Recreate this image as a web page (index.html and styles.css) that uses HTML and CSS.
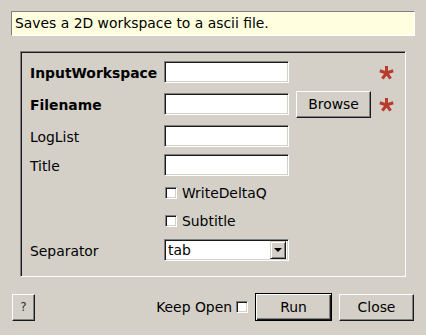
FILE: index.html
```html
<!DOCTYPE html>
<html>
  <head>
    <title>SaveAscii</title>
    <link rel="stylesheet" href="styles.css">
  </head>

  <body>
    <div class="dialog">
      <div class="tip">Saves a 2D workspace to a ascii file.</div>

      <div class="group">
        <div class="form">
          <label class="lbl bold">InputWorkspace</label>
          <input class="field" type="text">
          <span></span>
          <span class="star">
            <svg width="17" height="15" viewBox="0 0 17 15"><path d="M8.5 8V1M8.5 8L15.2 5.8M8.5 8L12.6 13.7M8.5 8L4.4 13.7M8.5 8L1.8 5.8" stroke="#b83b2b" stroke-width="3" fill="none"/></svg>
          </span>

          <label class="lbl bold">Filename</label>
          <input class="field" type="text">
          <button class="btn browse">Browse</button>
          <span class="star">
            <svg width="17" height="15" viewBox="0 0 17 15"><path d="M8.5 8V1M8.5 8L15.2 5.8M8.5 8L12.6 13.7M8.5 8L4.4 13.7M8.5 8L1.8 5.8" stroke="#b83b2b" stroke-width="3" fill="none"/></svg>
          </span>

          <label class="lbl">LogList</label>
          <input class="field" type="text">
          <span></span><span></span>

          <label class="lbl">Title</label>
          <input class="field" type="text">
          <span></span><span></span>

          <span></span>
          <label class="opt wide"><input class="check" type="checkbox"> WriteDeltaQ</label>

          <span></span>
          <label class="opt wide"><input class="check" type="checkbox"> Subtitle</label>

          <label class="lbl">Separator</label>
          <div class="combo">
            <span class="combo__value">tab</span>
            <span class="combo__arrow"></span>
          </div>
          <span></span><span></span>
        </div>
      </div>

      <div class="actions">
        <button class="btn help">?</button>
        <div class="spacer"></div>
        <label class="keep">Keep Open</label>
        <input class="check" type="checkbox">
        <button class="btn run">Run</button>
        <button class="btn close">Close</button>
      </div>
    </div>
  </body>
</html>
```

FILE: styles.css
```css
* {
  box-sizing: border-box;
  margin: 0;
  padding: 0;
}

body {
  background: #d4d0c8;
  font-family: "DejaVu Sans", sans-serif;
  font-size: 13.9px;
  color: #000;
}

.dialog {
  padding: 11px;
}

.tip {
  height: 25px;
  padding: 0 3px;
  line-height: 23px;
  background: #ffffdf;
  border: 1px solid;
  border-color: #808080 #fff #fff #808080;
}

.group {
  margin: 15px 9px 0;
  padding: 9px 9px 15px;
  border: 1px solid;
  border-color: #808080 #fff #fff #808080;
  box-shadow: inset 1px 1px #1a1a1a;
}

.form {
  display: grid;
  grid-template-columns: 127px 125px 75px 17px;
  grid-template-rows: 22px 28px 22px 22px 20px 22px 22px;
  column-gap: 7px;
  row-gap: 7px;
  align-items: center;
}

.lbl {
  line-height: 16px;
  white-space: nowrap;
  padding-top: 1px;
}

.bold {
  font-weight: bold;
}

.field {
  width: 125px;
  height: 22px;
  background: #fff;
  border: 1px solid;
  border-color: #808080 #fff #fff #808080;
  box-shadow: inset 1px 1px #1a1a1a, inset -1px -1px #d4d0c8;
  font: inherit;
  outline: none;
}

.star {
  display: flex;
  align-items: center;
}

.btn {
  font: inherit;
  color: #000;
  background: #d4d0c8;
  border: 1px solid;
  border-color: #fff #1a1a1a #1a1a1a #fff;
  box-shadow: inset -1px -1px #808080;
  height: 27px;
}

.browse {
  width: 75px;
}

.opt {
  display: flex;
  align-items: center;
  gap: 5px;
  line-height: 16px;
}

.wide {
  grid-column: 2 / 5;
}

.check {
  appearance: none;
  display: block;
  width: 12px;
  height: 12px;
  margin-left: 1px;
  background: #fff;
  border: 1px solid;
  border-color: #808080 #fff #fff #808080;
  box-shadow: inset 1px 1px #1a1a1a, inset -1px -1px #d4d0c8;
}

.combo {
  display: flex;
  align-items: center;
  width: 125px;
  height: 22px;
  background: #fff;
  border: 1px solid;
  border-color: #808080 #fff #fff #808080;
  box-shadow: inset 1px 1px #1a1a1a, inset -1px -1px #d4d0c8;
  padding: 2px;
}

.combo__value {
  flex: 1;
  padding-left: 1px;
  line-height: 16px;
}

.combo__arrow {
  display: flex;
  align-items: center;
  justify-content: center;
  width: 16px;
  height: 18px;
  background: #d4d0c8;
  border: 1px solid;
  border-color: #d4d0c8 #1a1a1a #1a1a1a #d4d0c8;
  box-shadow: inset 1px 1px #fff, inset -1px -1px #808080;
}

.combo__arrow::after {
  content: "";
  border-left: 4px solid transparent;
  border-right: 4px solid transparent;
  border-top: 4px solid #000;
}

.actions {
  display: flex;
  align-items: center;
  height: 28px;
  margin-top: 16px;
  padding: 0 1px;
}

.spacer {
  flex: 1;
}

.help {
  width: 23px;
  font-size: 12px;
  color: #333;
}

.keep {
  margin-right: 4px;
}

.actions .check {
  margin-left: 0;
}

.run {
  width: 77px;
  height: 28px;
  margin-left: 7px;
  border: 1px solid #000;
  box-shadow: inset 1px 1px #fff, inset -1px -1px #1a1a1a, inset -2px -2px #808080;
}

.close {
  width: 75px;
  margin-left: 7px;
}
```
